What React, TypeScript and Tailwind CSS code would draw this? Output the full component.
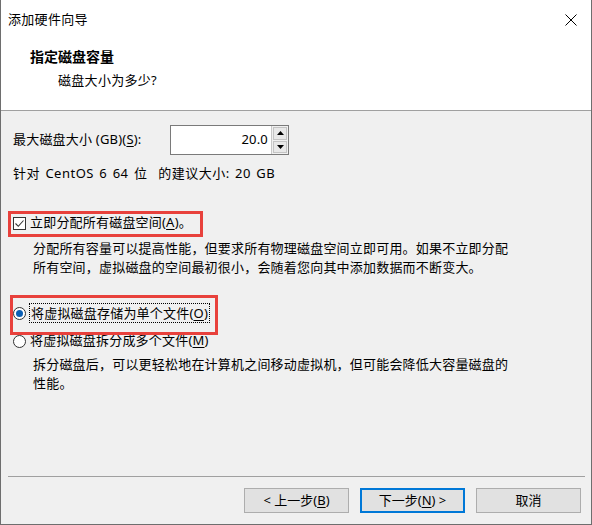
import React from "react";

const font = "font-['Noto_Sans','Noto_Sans_CJK_SC',sans-serif]";

function U({ children }: { children: React.ReactNode }) {
  return <span className="underline underline-offset-2">{children}</span>;
}

function Spin() {
  return (
    <div className="w-[17px] flex flex-col gap-[1px] p-[1px] bg-[#f0f0f0] border-l border-[#c8c8c8]">
      <div className="flex-1 bg-[#e8e8e8] border border-[#c4c4c4] flex items-center justify-center">
        <svg width="7" height="4" viewBox="0 0 7 4">
          <path d="M3.5 0L7 4H0z" fill="#000" />
        </svg>
      </div>
      <div className="flex-1 bg-[#e8e8e8] border border-[#c4c4c4] flex items-center justify-center">
        <svg width="7" height="4" viewBox="0 0 7 4">
          <path d="M0 0h7L3.5 4z" fill="#000" />
        </svg>
      </div>
    </div>
  );
}

function Button({ children, primary }: { children: React.ReactNode; primary?: boolean }) {
  return (
    <div
      className={
        primary
          ? "w-[105px] h-[25px] flex items-center justify-center bg-[#e1e1e1] border-2 border-[#0078d7] text-[13px]"
          : "w-[105px] h-[25px] flex items-center justify-center bg-[#e1e1e1] border border-[#adadad] text-[13px]"
      }
    >
      {children}
    </div>
  );
}

export default function App() {
  return (
    <div
      className={`${font} relative w-[592px] h-[525px] flex flex-col bg-[#f0f0f0] border-x border-b border-[#6e6e6e] text-black`}
    >
      {/* 标题栏 + 向导头部 */}
      <div className="h-[111px] bg-white border-b border-[#a0a0a0]">
        <div className="h-10 flex items-center justify-between pl-[7px] pr-[14px]">
          <span className="text-[13px] tracking-[0.3px]">添加硬件向导</span>
          <svg width="12" height="12" viewBox="0 0 12 12">
            <path d="M0.5 0.5l11 11M11.5 0.5l-11 11" stroke="#000" strokeWidth="1" />
          </svg>
        </div>
        <p className="mt-[7px] pl-[29px] h-5 leading-5 text-[14px] font-bold">指定磁盘容量</p>
        <p className="mt-[3px] pl-[57px] h-5 leading-5 text-[13px] tracking-[0.3px]">磁盘大小为多少?</p>
      </div>

      {/* 内容 */}
      <div className="flex-1 px-[12px] text-[13px] tracking-[0.2px]">
        <div className="mt-[14px] h-[30px] flex items-center">
          <span className="w-[157px]">
            最大磁盘大小 (GB)(<U>S</U>):
          </span>
          <div className="w-[119px] h-[30px] flex bg-white border border-[#7a7a7a]">
            <div className="flex-1 flex items-center justify-end pr-[3px]">20.0</div>
            <Spin />
          </div>
        </div>
        <p className="mt-[8px] h-5 leading-5 whitespace-pre tracking-[0.5px] [word-spacing:1.5px]">
          {"针对 CentOS 6 64 位  的建议大小: 20 GB"}
        </p>

        <div className="mt-[30px] h-5 flex items-center">
          <div className="w-[13px] h-[13px] bg-white border border-[#333] flex items-center justify-center">
            <svg width="11" height="11" viewBox="0 0 11 11">
              <path d="M1.5 5.5l2.8 2.8L9.5 2.5" fill="none" stroke="#333" strokeWidth="1.1" />
            </svg>
          </div>
          <span className="ml-[4px]">
            立即分配所有磁盘空间(<U>A</U>)。
          </span>
        </div>
        <p className="mt-[6px] pl-[20px] leading-[19px]">
          分配所有容量可以提高性能，但要求所有物理磁盘空间立即可用。如果不立即分配
          <br />
          所有空间，虚拟磁盘的空间最初很小，会随着您向其中添加数据而不断变大。
        </p>

        <div className="mt-[26px] h-5 flex items-center">
          <div className="w-[13px] h-[13px] rounded-full bg-white border border-[#333] flex items-center justify-center">
            <div className="w-[7px] h-[7px] rounded-full bg-[#0a5fb4]" />
          </div>
          <span className="ml-[3px] px-[1px] border border-dotted border-black leading-[18px]">
            将虚拟磁盘存储为单个文件(<U>O</U>)
          </span>
        </div>
        <div className="mt-[8px] h-5 flex items-center">
          <div className="w-[13px] h-[13px] rounded-full bg-white border border-[#333]" />
          <span className="ml-[4px]">
            将虚拟磁盘拆分成多个文件(<U>M</U>)
          </span>
        </div>
        <p className="mt-[4px] pl-[20px] leading-[19px]">
          拆分磁盘后，可以更轻松地在计算机之间移动虚拟机，但可能会降低大容量磁盘的
          <br />
          性能。
        </p>
      </div>

      {/* 底部按钮 */}
      <div className="h-[48px] ml-[7px] mr-[6px] border-t border-[#a0a0a0] flex justify-end gap-[11px] pt-[11px] pr-[4px]">
        <Button>
          &lt; 上一步(<U>B</U>)
        </Button>
        <Button primary>
          下一步(<U>N</U>) &gt;
        </Button>
        <Button>取消</Button>
      </div>

      {/* 红色标注框 */}
      <div className="absolute left-[7px] top-[211px] w-[195px] h-[26px] border-[3px] border-[#e8413c]" />
      <div className="absolute left-[9px] top-[295px] w-[208px] h-[40px] border-[3px] border-[#e8413c]" />
    </div>
  );
}
